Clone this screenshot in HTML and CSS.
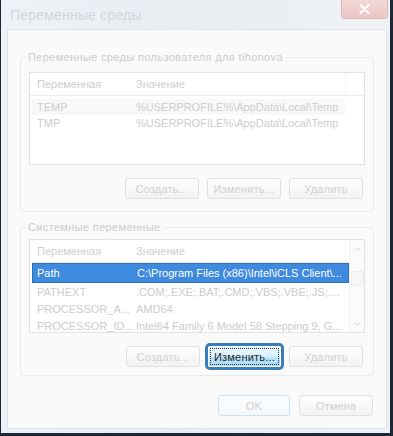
FILE: index.html
```html
<!DOCTYPE html>
<html lang="ru">
<head>
    <meta charset="UTF-8">
    <meta name="viewport" content="width=device-width, initial-scale=1.0">
    <title>Переменные среды</title>
    <link rel="stylesheet" href="styles.css">
</head>
<body>
    <div class="window">
        <div class="titlebar">
            <span class="title">Переменные среды</span>
            <span class="close-btn">
                <svg width="11" height="10" viewBox="0 0 11 10">
                    <path d="M1.5 1 L9.5 9 M9.5 1 L1.5 9" stroke="#ffffff" stroke-width="2.2" stroke-linecap="round"/>
                </svg>
            </span>
        </div>

        <div class="client">
            <fieldset class="group group-user">
                <legend>Переменные среды пользователя для tihonova</legend>
                <div class="listbox list-user">
                    <div class="list-main">
                        <div class="list-head">
                            <span class="col-name">Переменная</span>
                            <span class="col-value">Значение</span>
                            <span class="col-rest"></span>
                        </div>
                        <div class="list-body">
                            <div class="row row-hot">
                                <span class="col-name">TEMP</span>
                                <span class="col-value">%USERPROFILE%\AppData\Local\Temp</span>
                            </div>
                            <div class="row">
                                <span class="col-name">TMP</span>
                                <span class="col-value">%USERPROFILE%\AppData\Local\Temp</span>
                            </div>
                        </div>
                    </div>
                </div>
                <div class="btn-row">
                    <button type="button" class="btn">Создать...</button>
                    <button type="button" class="btn">Изменить...</button>
                    <button type="button" class="btn">Удалить</button>
                </div>
            </fieldset>

            <fieldset class="group group-system">
                <legend>Системные переменные</legend>
                <div class="listbox list-system">
                    <div class="list-main">
                        <div class="list-head">
                            <span class="col-name">Переменная</span>
                            <span class="col-value">Значение</span>
                        </div>
                        <div class="list-body">
                            <div class="row row-selected">
                                <span class="col-name">Path</span>
                                <span class="col-value">C:\Program Files (x86)\Intel\iCLS Client\...</span>
                            </div>
                            <div class="row">
                                <span class="col-name">PATHEXT</span>
                                <span class="col-value">.COM;.EXE;.BAT;.CMD;.VBS;.VBE;.JS;....</span>
                            </div>
                            <div class="row">
                                <span class="col-name">PROCESSOR_A...</span>
                                <span class="col-value">AMD64</span>
                            </div>
                            <div class="row">
                                <span class="col-name">PROCESSOR_ID...</span>
                                <span class="col-value">Intel64 Family 6 Model 58 Stepping 9, G...</span>
                            </div>
                        </div>
                    </div>
                    <div class="scrollbar">
                        <span class="scroll-arrow">
                            <svg width="7" height="4" viewBox="0 0 7 4"><path d="M0.5 3.5 L3.5 0.5 L6.5 3.5" fill="none" stroke="#d4d4d4"/></svg>
                        </span>
                        <span class="scroll-thumb"></span>
                        <span class="scroll-track"></span>
                        <span class="scroll-arrow">
                            <svg width="7" height="4" viewBox="0 0 7 4"><path d="M0.5 0.5 L3.5 3.5 L6.5 0.5" fill="none" stroke="#d4d4d4"/></svg>
                        </span>
                    </div>
                </div>
                <div class="btn-row">
                    <button type="button" class="btn">Создать...</button>
                    <button type="button" class="btn btn-focused">Изменить...</button>
                    <button type="button" class="btn">Удалить</button>
                </div>
            </fieldset>

            <div class="dialog-buttons">
                <button type="button" class="btn btn-default">OK</button>
                <button type="button" class="btn">Отмена</button>
            </div>
        </div>
    </div>
</body>
</html>
```

FILE: styles.css
```css
body {
    margin: 0;
    padding: 0;
    font-family: "Liberation Sans", Arial, sans-serif;
    font-size: 11px;
    background-color: #1c2733;
}

.window {
    width: 393px;
    height: 436px;
    box-sizing: border-box;
    border-left: 1px solid #1d2834;
    border-right: 3px solid #1d2834;
    border-bottom: 3px solid #1d2834;
    background: linear-gradient(90deg, #eef2f6 0%, #e9edf2 45%, #eef2f6 100%);
    display: flex;
    flex-direction: column;
}

.titlebar {
    height: 29px;
    display: flex;
    justify-content: space-between;
    align-items: flex-start;
}

.title {
    margin: 6px 0 0 9px;
    font-size: 14px;
    letter-spacing: 0.2px;
    line-height: 18px;
    color: #d2d6db;
}

.close-btn {
    width: 47px;
    height: 19px;
    margin-right: 2px;
    display: flex;
    align-items: center;
    justify-content: center;
    box-sizing: border-box;
    border: 1px solid #dcb9b6;
    border-top: none;
    border-radius: 0 0 4px 4px;
    background: linear-gradient(#f2d9d7, #ebc6c3);
}

.client {
    flex: 1;
    margin: 0 3px 4px 6px;
    border: 1px solid #dde3ea;
    background-color: #fafafa;
    padding: 19px 12px 0 12px;
    display: flex;
    flex-direction: column;
}

.group {
    margin: 0;
    padding: 0 8px;
    border: 1px solid #ebebeb;
    border-radius: 3px;
}

.group legend {
    margin-left: -3px;
    padding: 0 2px;
    line-height: 16px;
    letter-spacing: 0.35px;
    color: #cbcbcb;
}

.group-user {
    padding-top: 7px;
    padding-bottom: 12px;
}

.group-system {
    margin-top: 7px;
    padding-top: 4px;
    padding-bottom: 8px;
}

.listbox {
    display: flex;
    border: 1px solid #e2e2e2;
    background-color: #ffffff;
    color: #cccccc;
}

.list-user {
    height: 93px;
    box-sizing: border-box;
}

.list-system {
    height: 94px;
    box-sizing: border-box;
}

.list-main {
    flex: 1;
    overflow: hidden;
}

.list-head {
    display: flex;
    height: 22px;
    align-items: center;
    border-bottom: 1px solid #ededed;
    padding-left: 2px;
    color: #cdcdcd;
}

.list-user .list-body {
    padding-top: 3px;
}

.row {
    display: flex;
    height: 16px;
    align-items: center;
    margin: 0 2px;
    white-space: nowrap;
}

.list-system .row {
    height: 17px;
}

.col-name {
    width: 99px;
    padding-left: 5px;
    box-sizing: border-box;
    flex-shrink: 0;
}

.col-value {
    width: 215px;
    padding-left: 5px;
    box-sizing: border-box;
    flex-shrink: 0;
}

.list-head .col-value {
    border-right: 1px solid #f3f3f3;
    height: 22px;
    line-height: 22px;
}

.row-hot {
    width: 313px;
    background-color: #f8f8f8;
}

.list-system .row-selected {
    height: 20px;
    margin-right: 0;
    box-sizing: border-box;
    background-color: #3d8ade;
    border: 1px solid #2d70ba;
    color: #ffffff;
}

.list-system .row-selected .col-name {
    padding-left: 4px;
}

.scrollbar {
    width: 14px;
    display: flex;
    flex-direction: column;
    align-items: center;
    border-left: 1px solid #f1f1f1;
    background-color: #fbfbfb;
}

.scroll-arrow {
    height: 17px;
    display: flex;
    align-items: center;
    justify-content: center;
}

.scroll-thumb {
    width: 13px;
    height: 15px;
    margin-top: 14px;
    box-sizing: border-box;
    border: 1px solid #ececec;
    border-radius: 2px;
    background-color: #f6f6f6;
}

.scroll-track {
    flex: 1;
}

.btn-row {
    display: flex;
    justify-content: flex-end;
    gap: 8px;
    margin-top: 13px;
    padding-right: 2px;
}

.btn {
    width: 74px;
    height: 21px;
    padding: 0;
    box-sizing: border-box;
    border: 1px solid #e0e0e0;
    border-radius: 3px;
    background: linear-gradient(#fdfdfd, #f3f3f3);
    font-family: "Liberation Sans", Arial, sans-serif;
    font-size: 11px;
    letter-spacing: 0.2px;
    color: #d0d0d0;
}

.btn-focused {
    width: 73px;
    border: 1px solid #ffffff;
    border-radius: 2px;
    background: linear-gradient(#eaf6fd 0%, #d9f0fc 50%, #bee6fd 51%, #a7d9f5 100%);
    box-shadow: 0 0 0 3px #3b7db5;
    outline: 1px dotted #333333;
    outline-offset: -3px;
    color: #1e1e1e;
}

.dialog-buttons {
    display: flex;
    justify-content: flex-end;
    gap: 9px;
    margin-top: 19px;
    padding-right: 1px;
}

.btn-default {
    width: 72px;
    border-color: #c9e1f1;
    background: linear-gradient(#fbfdff, #f2f8fc);
}
```
